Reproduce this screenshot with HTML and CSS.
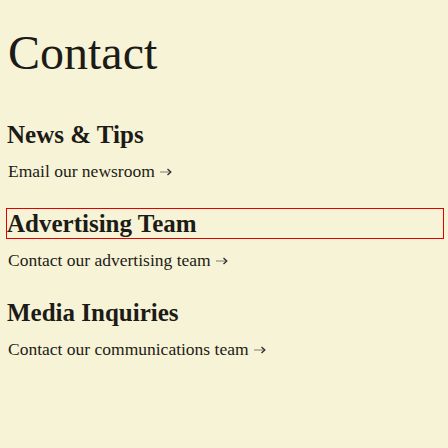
FILE: index.html
```html
<!DOCTYPE html>
<html lang="en">
<head>
<meta charset="utf-8">
<title>Contact</title>
<link rel="stylesheet" href="styles.css">
</head>
<body>
<main class="page">
  <h1 class="title">Contact</h1>
  <section class="group">
    <h2 class="group-title">News &amp; Tips</h2>
    <a class="group-link" href="#">Email our newsroom <svg class="arrow" width="12" height="8" viewBox="0 0 12 8"><path d="M0 4H10.5" stroke="#9a978a" stroke-width="1.3"/><path d="M7.5 1L10.8 4L7.5 7" fill="none" stroke="#2a2a33" stroke-width="1.3"/></svg></a>
  </section>
  <section class="group">
    <h2 class="group-title is-outlined">Advertising Team</h2>
    <a class="group-link" href="#">Contact our advertising team <svg class="arrow" width="12" height="8" viewBox="0 0 12 8"><path d="M0 4H10.5" stroke="#9a978a" stroke-width="1.3"/><path d="M7.5 1L10.8 4L7.5 7" fill="none" stroke="#2a2a33" stroke-width="1.3"/></svg></a>
  </section>
  <section class="group">
    <h2 class="group-title">Media Inquiries</h2>
    <a class="group-link" href="#">Contact our communications team <svg class="arrow" width="12" height="8" viewBox="0 0 12 8"><path d="M0 4H10.5" stroke="#9a978a" stroke-width="1.3"/><path d="M7.5 1L10.8 4L7.5 7" fill="none" stroke="#2a2a33" stroke-width="1.3"/></svg></a>
  </section>
</main>
</body>
</html>
```
FILE: styles.css
```css
html, body {
  margin: 0;
  background: #f7f3d6;
}
body {
  padding: 25px 5px 0 7px;
  font-family: "Liberation Serif", "Times New Roman", serif;
  color: #1c1b17;
}
.page {
  display: flex;
  flex-direction: column;
}
.title {
  margin: 0 0 39px 1px;
  font-size: 48px;
  line-height: 56px;
  font-weight: 400;
}
.group {
  display: flex;
  flex-direction: column;
  gap: 10px;
  margin-bottom: 26px;
}
.group-title {
  margin: 0;
  font-size: 25px;
  line-height: 29px;
  font-weight: 700;
}
.is-outlined {
  outline: 1px solid #e30000;
}
.group-link {
  margin-left: 1px;
  font-size: 17.5px;
  line-height: 24px;
  color: #1c1b17;
  text-decoration: none;
}
.arrow {
  margin-left: 1px;
  vertical-align: 1px;
}
```
